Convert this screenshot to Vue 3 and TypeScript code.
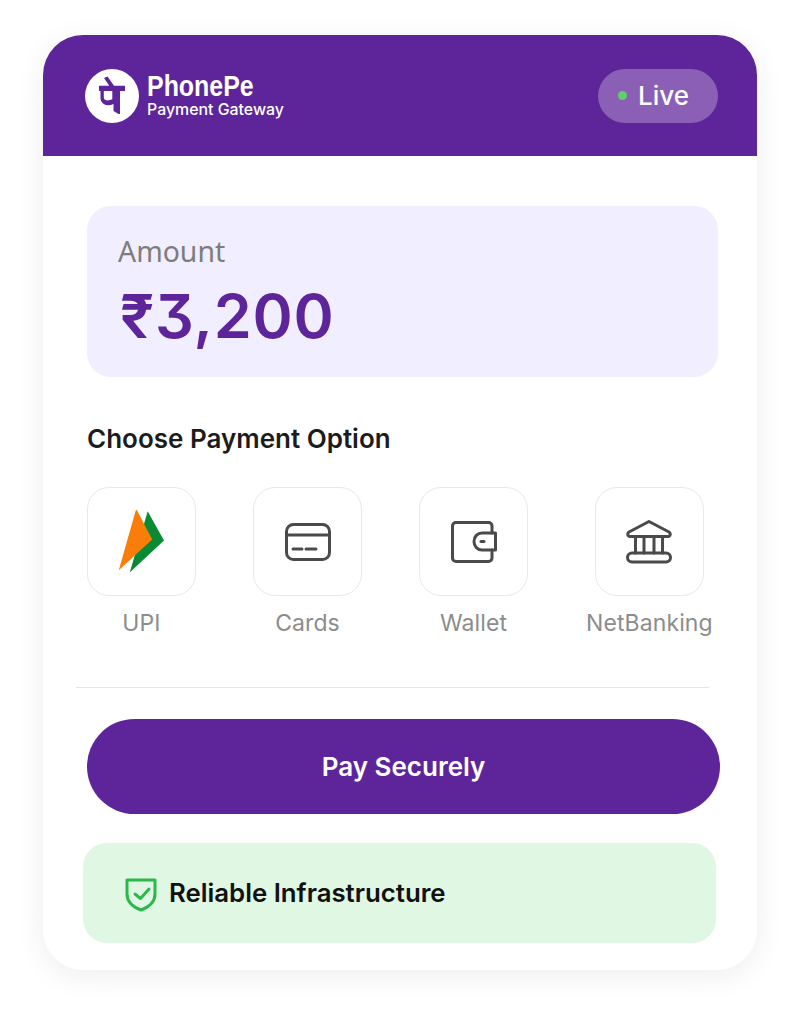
<script setup lang="ts">
interface PayOption {
  label: string
  icon: 'upi' | 'card' | 'wallet' | 'bank'
}

const options: PayOption[] = [
  { label: 'UPI', icon: 'upi' },
  { label: 'Cards', icon: 'card' },
  { label: 'Wallet', icon: 'wallet' },
  { label: 'NetBanking', icon: 'bank' },
]
</script>

<template>
  <div class="page">
    <div class="card">
      <header class="header">
        <div class="brand">
          <svg class="logo" width="54" height="54" viewBox="0 0 54 54">
            <circle cx="27" cy="27" r="27" fill="#fff" />
            <path d="M19 9l3.500-1.500 6.500 9.300h11v5.200h-5v23h-1.500l-5-3v-7c-1.800.8-3.500 1.200-5.200 1.200-4.500 0-7.800-3-7.800-7.200v-7h-1.500v-5.200h10.200zM18.800 22v6.200c0 2.300 1.800 3.300 3.800 3.300 1.500 0 3.200-.5 4.700-1.200v-8.300z" fill="#5e259b" fill-rule="evenodd" />
          </svg>
          <div class="brand-text">
            <span class="brand-name">PhonePe</span>
            <span class="brand-sub">Payment Gateway</span>
          </div>
        </div>
        <div class="live"><i class="dot"></i>Live</div>
      </header>

      <section class="amount">
        <div class="amount-label">Amount</div>
        <div class="amount-value">₹3,200</div>
      </section>

      <h2 class="title">Choose Payment Option</h2>

      <div class="options">
        <div v-for="opt in options" :key="opt.label" class="option">
          <div class="tile">
            <svg v-if="opt.icon === 'upi'" width="46" height="64" viewBox="1 1.500 46 64">
              <path d="M29.700 2.700 46 32 11.700 64z" fill="#0b8a36" />
              <path d="M18.200.300 34.200 31 .800 61.700z" fill="#f97d09" />
            </svg>
            <svg v-else-if="opt.icon === 'card'" width="46" height="38" viewBox="0 0 46 38" class="line-icon">
              <rect x="1.500" y="1.500" width="43" height="35" rx="7" />
              <path d="M1.500 12h43M8 26h9M21 26h10" />
            </svg>
            <svg v-else-if="opt.icon === 'wallet'" width="46" height="42" viewBox="0 0 46 42" class="line-icon">
              <path d="M41 12V5c0-2-1.500-3.500-3.500-3.500H5C3 1.500 1.500 3 1.500 5v32c0 2 1.500 3.500 3.500 3.500h32.500c2 0 3.500-1.500 3.500-3.500v-8" />
              <path d="M31 12h13.500v17H31c-4.500 0-8-3.500-8-8.500S26.500 12 31 12z" />
              <path d="M30 20.500h3" />
            </svg>
            <svg v-else width="46" height="44" viewBox="0 0 46 44" class="line-icon">
              <path d="M23 1.500 43 12c2 1.500 1.500 4.500-1.500 4.500h-37C1.500 16.500 1 13.500 3 12z" />
              <path d="M9.500 17v16M18 17v16M28 17v16M36.500 17v16" />
              <rect x="1.500" y="33" width="43" height="9" rx="4.500" />
            </svg>
          </div>
          <span class="option-label">{{ opt.label }}</span>
        </div>
      </div>

      <hr class="divider" />

      <button class="pay" type="button">Pay Securely</button>

      <div class="reliable">
        <svg class="shield" width="32" height="34" viewBox="0 0 32 34" fill="none" stroke="#2db84b" stroke-width="3" stroke-linecap="round" stroke-linejoin="round">
          <path d="M2 2h28v14c0 8-6 13-14 16C8 29 2 24 2 16z" />
          <path d="M10 16l5.500 4.500L24 11" />
        </svg>
        <span>Reliable Infrastructure</span>
      </div>
    </div>
  </div>
</template>

<style>
html, body {
  background: #fff;
}
</style>

<style scoped>
.page {
  box-sizing: border-box;
  height: 1021px;
  padding: 35px 0 0 43px;
  overflow: hidden;
}

.card {
  box-sizing: border-box;
  width: 714px;
  height: 935px;
  background: #fff;
  border-radius: 40px;
  box-shadow: 0 6px 30px rgba(0, 0, 0, 0.07);
  overflow: hidden;
  font-family: Inter, "Liberation Sans", sans-serif;
}

.header {
  height: 121px;
  background: #5e259b;
  display: flex;
  align-items: center;
  justify-content: space-between;
  padding: 0 39px 0 42px;
  color: #fff;
}

.brand {
  display: flex;
  align-items: center;
  gap: 8px;
}

.brand-text {
  display: flex;
  flex-direction: column;
}

.brand-name {
  font-family: "Liberation Sans", sans-serif;
  font-weight: 700;
  font-size: 29px;
  line-height: 29px;
  transform: scaleX(0.86);
  transform-origin: left center;
}

.brand-sub {
  font-size: 15.900px;
  font-weight: 500;
  line-height: 18px;
}

.live {
  width: 120px;
  height: 54px;
  box-sizing: border-box;
  padding-left: 20px;
  border-radius: 27px;
  background: #8a5fb5;
  display: flex;
  align-items: center;
  gap: 11px;
  font-size: 26px;
  font-weight: 500;
}

.dot {
  width: 9px;
  height: 9px;
  border-radius: 50%;
  background: #5fd068;
}

.amount {
  box-sizing: border-box;
  width: 631px;
  height: 171px;
  margin: 50px 0 0 44px;
  padding: 26px 31px 0;
  border-radius: 24px;
  background: #f0eeff;
}

.amount-label {
  font-family: "Noto Sans", sans-serif;
  font-size: 28.400px;
  line-height: 38px;
  color: #7d7d7d;
}

.amount-value {
  font-size: 61px;
  font-weight: 600;
  line-height: 70px;
  letter-spacing: 0.800px;
  margin: 11px 0 0 2px;
  font-feature-settings: "cv09";
  color: #5e259b;
}

.title {
  margin: 47px 0 0 44px;
  font-size: 26px;
  font-weight: 600;
  line-height: 30px;
  color: #1c1c1c;
}

.options {
  display: flex;
  gap: 57px;
  margin: 33px 0 0 44px;
}

.option {
  display: flex;
  flex-direction: column;
  align-items: center;
  gap: 12px;
}

.option:last-child {
  margin-left: 1px;
}

.tile {
  box-sizing: border-box;
  width: 109px;
  height: 109px;
  border: 1.500px solid #e8e8ec;
  border-radius: 22px;
  display: flex;
  align-items: center;
  justify-content: center;
}

.line-icon {
  fill: none;
  stroke: #4a4a4a;
  stroke-width: 3;
  stroke-linecap: round;
  stroke-linejoin: round;
}

.option-label {
  font-size: 23px;
  letter-spacing: 0.100px;
  line-height: 30px;
  color: #8c8c8c;
}

.divider {
  width: 633px;
  height: 1px;
  margin: 49px 0 0 33px;
  border: 0;
  background: #e4e4e4;
}

.pay {
  display: block;
  width: 633px;
  height: 95px;
  margin: 31px 0 0 44px;
  border: 0;
  border-radius: 48px;
  background: #5e259b;
  color: #fff;
  font-family: inherit;
  font-size: 26px;
  font-weight: 600;
}

.reliable {
  box-sizing: border-box;
  width: 633px;
  height: 100px;
  margin: 29px 0 0 40px;
  padding: 0 0 2px 42px;
  border-radius: 24px;
  background: #dff7e3;
  display: flex;
  align-items: center;
  gap: 12px;
  font-size: 25.800px;
  font-weight: 600;
  color: #111;
}

.shield {
  margin-top: 6px;
}
</style>
